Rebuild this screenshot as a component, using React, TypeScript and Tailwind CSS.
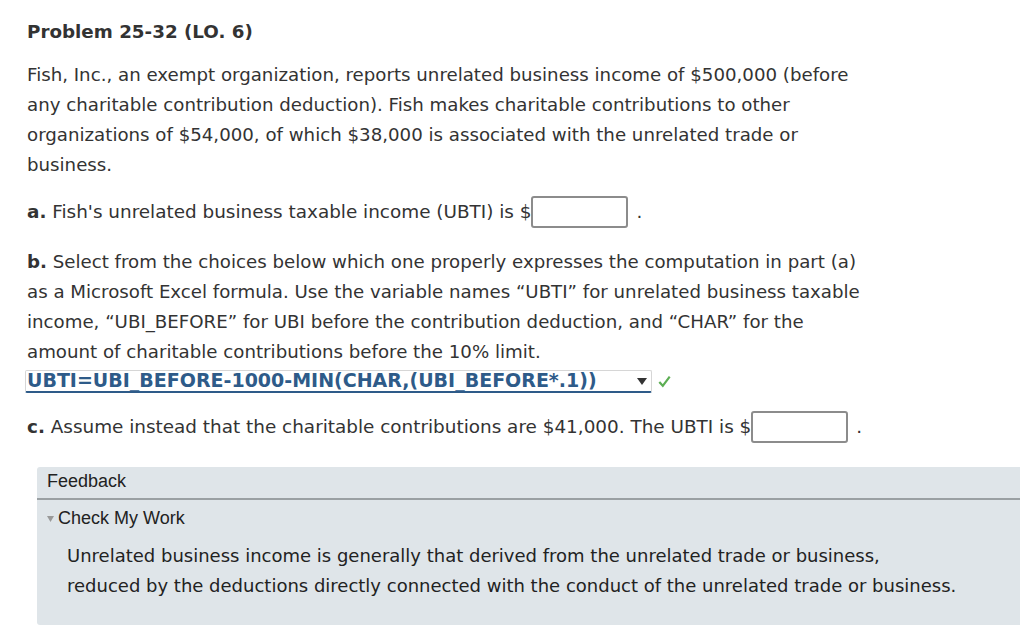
import React from "react";

const Input = () => (
  <span className="inline-block align-middle w-[97px] h-[32px] border-2 border-[#8c8c8c] rounded-[3px] bg-white" />
);

export default function App() {
  return (
    <div className="w-[1020px] h-[638px] bg-white overflow-hidden text-[#333333] text-[18.2px]" style={{ fontFamily: '"DejaVu Sans", Verdana, sans-serif' }}>
      <div className="pl-[27px] pt-[20px]">
        <h1 className="font-bold text-[18.3px] leading-[24px]">Problem 25-32 (LO. 6)</h1>
        <p className="mt-[16px] leading-[30px] whitespace-nowrap">
          Fish, Inc., an exempt organization, reports unrelated business income of $500,000 (before<br />
          any charitable contribution deduction). Fish makes charitable contributions to other<br />
          organizations of $54,000, of which $38,000 is associated with the unrelated trade or<br />
          business.
        </p>
        <div className="mt-[16px] h-[32px] flex items-center text-[18.4px] whitespace-nowrap">
          <span><b>a.</b> Fish's unrelated business taxable income (UBTI) is $</span>
          <Input />
          <span className="ml-[8px]">.</span>
        </div>
        <p className="mt-[19px] leading-[30px] whitespace-nowrap">
          <b>b.</b> Select from the choices below which one properly expresses the computation in part (a)<br />
          as a Microsoft Excel formula. Use the variable names “UBTI” for unrelated business taxable<br />
          income, “UBI_BEFORE” for UBI before the contribution deduction, and “CHAR” for the<br />
          amount of charitable contributions before the 10% limit.
        </p>
        <div className="mt-[2px] flex items-center h-[24px]">
          <div className="relative -ml-[2px] w-[627px] h-[23px] bg-white border border-[#d6d6d6] border-b-2 border-b-[#2e5b89] rounded-[2px] flex items-start pl-[1px] overflow-hidden">
            <span className="font-bold text-[19px] text-[#2e5b89] underline underline-offset-[6px] decoration-[1.5px] leading-[19px] whitespace-nowrap">UBTI=UBI_BEFORE-1000-MIN(CHAR,(UBI_BEFORE*.1))</span>
            <svg className="absolute right-[4px] top-[7px]" width="10" height="7" viewBox="0 0 10 7"><path d="M0 0 L10 0 L5 7 Z" fill="#333" /></svg>
          </div>
          <svg className="ml-[6px]" width="13" height="13" viewBox="0 0 13 13"><path d="M1.3 7 L4.8 10.8 L11.7 1.6" stroke="#5cae53" strokeWidth="2.2" fill="none" /></svg>
        </div>
        <div className="mt-[18px] h-[32px] flex items-center text-[18.4px] whitespace-nowrap">
          <span><b>c.</b> Assume instead that the charitable contributions are $41,000. The UBTI is $</span>
          <Input />
          <span className="ml-[8px]">.</span>
        </div>
      </div>
      <div className="ml-[37px] mt-[24px] w-[990px] h-[158px] bg-[#dfe5e9] rounded-l-[3px]">
        <div className="h-[33px] border-b-2 border-[#9aa0a3] flex items-center pb-[3px] pl-[10px] text-[#222] text-[18px]" style={{ fontFamily: '"Liberation Sans", Arial, sans-serif' }}>Feedback</div>
        <div className="flex items-center pl-[10px] h-[36px] text-[#222] text-[18px]" style={{ fontFamily: '"Liberation Sans", Arial, sans-serif' }}>
          <svg width="7" height="6" viewBox="0 0 7 6" className="mr-[4px] mt-[2px]"><path d="M0 0 L7 0 L3.5 6 Z" fill="#999" /></svg>
          Check My Work
        </div>
        <p className="pl-[30px] pt-[5px] text-[18px] leading-[30px] text-[#222] whitespace-nowrap">
          Unrelated business income is generally that derived from the unrelated trade or business,<br />
          reduced by the deductions directly connected with the conduct of the unrelated trade or business.
        </p>
      </div>
    </div>
  );
}
